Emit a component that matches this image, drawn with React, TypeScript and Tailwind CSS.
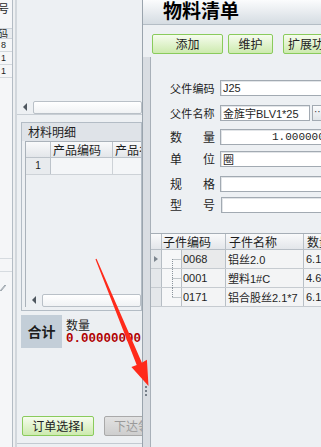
import React from "react";

function LeftArrow() {
  return (
    <div className="w-[16px] h-full flex items-center justify-center shrink-0">
      <div className="w-0 h-0 border-y-[4px] border-y-transparent border-r-[4px] border-r-[#4f575f]" />
    </div>
  );
}

function TreeCell({ kind }: { kind: "first" | "mid" | "last" }) {
  const y1 = kind === "first" ? 9 : 0;
  const y2 = kind === "last" ? 9 : 19;
  return (
    <div className="w-[19px] h-full shrink-0 bg-[#f6f7f8]">
      <svg width="19" height="19" viewBox="0 0 19 19">
        <line x1="10.5" y1={y1} x2="10.5" y2={y2} stroke="#8b949c" strokeWidth="1" strokeDasharray="1 1" />
        <line x1="10.5" y1="9.5" x2="19" y2="9.5" stroke="#8b949c" strokeWidth="1" strokeDasharray="1 1" />
      </svg>
    </div>
  );
}

function GridRow({
  kind,
  code,
  name,
  qty,
  selected,
}: {
  kind: "first" | "mid" | "last";
  code: string;
  name: React.ReactNode;
  qty: string;
  selected?: boolean;
}) {
  return (
    <div className="h-[19px] flex border-b border-[#c6cbd0] text-[11px] leading-[18px]">
      <div className="w-[11px] shrink-0 bg-[#e4e7ea] border-r border-[#b6bdc4] flex items-center justify-center">
        {selected && (
          <div className="w-0 h-0 border-y-[3px] border-y-transparent border-l-[4px] border-l-[#7d868f]" />
        )}
      </div>
      <TreeCell kind={kind} />
      <div
        className={
          selected
            ? "w-[45px] shrink-0 border-x border-[#b8bfc6] bg-[#e9eaeb] pl-[1px]"
            : "w-[45px] shrink-0 border-x border-[#b8bfc6] bg-[#f3f4f5] pl-[1px]"
        }
      >
        {code}
      </div>
      <div className="w-[78px] shrink-0 border-r border-[#b8bfc6] bg-[#f3f4f5] pl-[2px] whitespace-nowrap overflow-hidden">
        {name}
      </div>
      <div className="flex-1 bg-[#f3f4f5] pl-[2px]">{qty}</div>
    </div>
  );
}

function FormRow({
  label,
  children,
  className,
}: {
  label: React.ReactNode;
  children: React.ReactNode;
  className: string;
}) {
  return (
    <div className={"flex items-center h-[16px] " + className}>
      <div className="ml-[19px] w-[45px] mr-[5px] shrink-0 flex justify-between whitespace-nowrap text-[12px] leading-[16px] font-['Noto_Sans_CJK_SC',sans-serif]">
        {label}
      </div>
      {children}
    </div>
  );
}

function Input({ children, className }: { children?: React.ReactNode; className: string }) {
  return (
    <div
      className={
        "h-[16px] shrink-0 border border-[#a2aab2] bg-white shadow-[inset_1px_1px_0_#e2e5e8] text-[11px] leading-[14px] whitespace-nowrap overflow-hidden " +
        className
      }
    >
      {children}
    </div>
  );
}

export default function App() {
  return (
    <div className="relative flex w-[321px] h-[447px] overflow-hidden bg-[#edf0f3] text-[12px] text-[#1e1e1e] font-['Liberation_Sans','Noto_Sans_CJK_SC',sans-serif]">
      {/* far-left cut-off table */}
      <div className="w-[13px] shrink-0 flex flex-col bg-[#f5f6f8] border-r border-[#b4bcc4] overflow-hidden">
        <div className="h-[29px] shrink-0 border-b border-[#cdd3d9] flex justify-end pr-[3px] pt-[3px] text-[11px] leading-[11px] font-['Noto_Sans_CJK_SC',sans-serif]">
          号
        </div>
        <div className="h-[10px] shrink-0 border-b border-[#cdd3d9] bg-[#e9ecef] flex justify-end pr-[4px] text-[10px] leading-[9px] overflow-hidden font-['Noto_Sans_CJK_SC',sans-serif]">
          码
        </div>
        <div className="h-[13px] shrink-0 border-b border-[#d3d8dd] text-[9px] leading-[12px] pl-[1px]">8</div>
        <div className="h-[13px] shrink-0 border-b border-[#d3d8dd] text-[9px] leading-[12px] pl-[1px]">1</div>
        <div className="h-[13px] shrink-0 border-b border-[#d3d8dd] text-[9px] leading-[12px] pl-[1px]">1</div>
        <div className="h-[181px] shrink-0 border-b border-[#d6dbe0]" />
        <div className="h-[13px] shrink-0 border-b border-[#d6dbe0]" />
        <div className="h-[30px] shrink-0 flex items-center">
          <svg width="6" height="10" viewBox="0 0 6 10">
            <path d="M0 9 L5 3 M1 9 L6 3" stroke="#9aa3ab" strokeWidth="1" />
          </svg>
        </div>
        <div className="flex-1" />
      </div>
      <div className="w-[4px] shrink-0 bg-[#eef0f2] border-r-2 border-[#d2d7dc]" />

      {/* left panel */}
      <div className="w-[125px] shrink-0 flex flex-col overflow-hidden">
        <div className="h-[100px] shrink-0" />
        <div className="h-[14px] shrink-0 flex items-center">
          <LeftArrow />
          <div className="flex-1 h-[13px] border border-[#b9c0c7] rounded-[2px] bg-gradient-to-b from-white to-[#f0f2f4]" />
        </div>
        <div className="h-[1px] shrink-0 bg-[#c8ced4]" />
        <div className="h-[7px] shrink-0" />
        {/* group box */}
        <div className="ml-[4px] w-[121px] h-[189px] shrink-0 border border-[#b3bcc5] flex flex-col">
          <div className="h-[18px] shrink-0 bg-[#dfe3e8] pl-[6px] text-[12px] leading-[18px] font-['Noto_Sans_CJK_SC',sans-serif]">
            材料明细
          </div>
          <div className="ml-[3px] flex-1 flex flex-col border-l border-t border-[#aab2ba] overflow-hidden">
            <div className="h-[16px] shrink-0 flex bg-gradient-to-b from-[#f9fafb] to-[#e3e6ea] border-b border-[#bcc3ca] text-[12px] leading-[15px] font-['Noto_Sans_CJK_SC',sans-serif]">
              <div className="w-[25px] shrink-0 border-r border-[#bcc3ca]" />
              <div className="w-[62px] shrink-0 border-r border-[#bcc3ca] pl-[2px]">产品编码</div>
              <div className="w-[60px] shrink-0 pl-[2px] whitespace-nowrap">产品名称</div>
            </div>
            <div className="h-[17px] shrink-0 flex border-b border-[#cdd2d7] text-[10px] leading-[16px]">
              <div className="w-[25px] shrink-0 border-r border-[#bcc3ca] bg-[#e8ebee] text-center">1</div>
              <div className="w-[62px] shrink-0 border-r border-[#cdd2d7] bg-[#f4f6f8]" />
              <div className="flex-1 bg-[#f4f6f8]" />
            </div>
            <div className="flex-1" />
            <div className="h-[14px] shrink-0 flex items-center">
              <LeftArrow />
              <div className="flex-1 h-[13px] border border-[#b9c0c7] rounded-[2px] bg-gradient-to-b from-white to-[#f0f2f4]" />
            </div>
          </div>
          <div className="h-[3px] shrink-0" />
        </div>
        {/* 合计 */}
        <div className="mt-[4px] ml-[4px] w-[121px] h-[33px] shrink-0 flex overflow-hidden">
          <div className="w-[41px] shrink-0 bg-[#c3ced8] flex items-center justify-center text-[14px] font-bold font-['Noto_Sans_CJK_SC',sans-serif]">
            合计
          </div>
          <div className="flex-1 bg-[#eceff2] pl-[4px] flex flex-col overflow-hidden">
            <div className="pt-[2px] text-[12px] leading-[15px] font-['Noto_Sans_CJK_SC',sans-serif]">数量</div>
            <div className="mt-[1px] font-['Liberation_Mono',monospace] font-bold text-[12.5px] leading-[13px] text-[#b00000] whitespace-nowrap">
              0.00000000
            </div>
          </div>
        </div>
        {/* buttons */}
        <div className="mt-[68px] ml-[5px] h-[20px] shrink-0 flex gap-[10px]">
          <div className="w-[72px] shrink-0 h-[20px] border border-[#8acb5c] rounded-[2px] bg-gradient-to-b from-[#f6fcee] to-[#cdeaae] flex items-center justify-center text-[12px] leading-none text-[#222] font-['Noto_Sans_CJK_SC',sans-serif]">
            订单选择I
          </div>
          <div className="w-[60px] shrink-0 h-[20px] border border-[#a9a9a9] rounded-[2px] bg-gradient-to-b from-[#e2e2e2] to-[#cecece] flex items-center pl-[9px] text-[12px] leading-none text-[#9a9a9a] whitespace-nowrap font-['Noto_Sans_CJK_SC',sans-serif]">
            下达领料
          </div>
        </div>
        <div className="mt-[7px] h-[1px] shrink-0 bg-[#c3cad1]" />
        <div className="flex-1" />
      </div>

      {/* right window */}
      <div className="w-[330px] shrink-0 flex flex-col border-l border-[#9aa4ad]">
        <div className="h-[25px] shrink-0 bg-gradient-to-b from-[#fbfcfd] to-[#d5dce2] border-b border-[#b4bdc5] pl-[20px] text-[19px] leading-[19px] font-bold text-black font-['Noto_Sans_CJK_SC',sans-serif]">
          物料清单
        </div>
        <div className="h-[32px] shrink-0 flex items-start pt-[9px] pl-[9px] font-['Noto_Sans_CJK_SC',sans-serif]">
          <div className="w-[71px] shrink-0 h-[20px] border border-[#8acb5c] rounded-[2px] bg-gradient-to-b from-[#f6fcee] to-[#cdeaae] flex items-center justify-center text-[12px] leading-none text-[#222]">
            添加
          </div>
          <div className="ml-[5px] w-[45px] shrink-0 h-[20px] border border-[#8acb5c] rounded-[2px] bg-gradient-to-b from-[#f6fcee] to-[#cdeaae] flex items-center justify-center text-[12px] leading-none text-[#222]">
            维护
          </div>
          <div className="ml-[10px] w-[70px] shrink-0 h-[20px] border border-[#8acb5c] rounded-[2px] bg-gradient-to-b from-[#f6fcee] to-[#cdeaae] flex items-center pl-[4px] text-[12px] leading-none text-[#222] whitespace-nowrap">
            扩展功能
          </div>
        </div>
        <div className="flex-1 flex min-h-0">
          {/* splitter strip */}
          <div className="w-[7px] shrink-0 bg-[#d9dde2] flex flex-col">
            <div className="h-[329px] shrink-0" />
            <div className="flex flex-col gap-[2px] ml-[2px]">
              <div className="w-[2px] h-[2px] bg-[#77808a]" />
              <div className="w-[2px] h-[2px] bg-[#77808a]" />
              <div className="w-[2px] h-[2px] bg-[#77808a]" />
            </div>
          </div>
          {/* content */}
          <div className="flex-1 flex flex-col border-l border-[#a8b0b8]">
            <div className="h-[23px] shrink-0" />
            <FormRow label={<span className="text-[11px] tracking-[0.2px]">父件编码</span>} className="">
              <Input className="w-[110px] pl-[2px]">J25</Input>
            </FormRow>
            <FormRow label={<span className="text-[11px] tracking-[0.2px]">父件名称</span>} className="mt-[9px]">
              <Input className="w-[90px] pl-[2px]">
                <span className="font-['Noto_Sans_CJK_SC',sans-serif] text-[11px]">金旌宇</span>
                <span>BLV1*25</span>
              </Input>
              <div className="ml-[2px] w-[14px] h-[16px] shrink-0 border border-[#a2aab2] bg-gradient-to-b from-[#fafbfc] to-[#e1e5e9] text-[10px] leading-[12px] pl-[1px] text-[#333]">
                ··
              </div>
            </FormRow>
            <FormRow
              label={
                <>
                  <span>数</span>
                  <span>量</span>
                </>
              }
              className="mt-[8px]"
            >
              <Input className="w-[110px] pl-[51px] font-['Liberation_Mono',monospace] text-[10px]">1.00000000</Input>
            </FormRow>
            <FormRow
              label={
                <>
                  <span>单</span>
                  <span>位</span>
                </>
              }
              className="mt-[6px]"
            >
              <Input className="w-[110px] pl-[2px] font-['Noto_Sans_CJK_SC',sans-serif]">圈</Input>
            </FormRow>
            <FormRow
              label={
                <>
                  <span>规</span>
                  <span>格</span>
                </>
              }
              className="mt-[9px]"
            >
              <Input className="w-[110px]" />
            </FormRow>
            <FormRow
              label={
                <>
                  <span>型</span>
                  <span>号</span>
                </>
              }
              className="mt-[5px]"
            >
              <Input className="w-[110px] ml-[1px]" />
            </FormRow>
            {/* grid */}
            <div className="mt-[20px] flex-1 flex flex-col border-t border-[#a6aeb6]">
              <div className="h-[16px] shrink-0 flex bg-gradient-to-b from-[#f9fafb] to-[#e3e6ea] border-b border-[#b8bfc6] text-[12px] leading-[15px] font-['Noto_Sans_CJK_SC',sans-serif]">
                <div className="w-[11px] shrink-0 border-r border-[#b8bfc6]" />
                <div className="w-[64px] shrink-0 border-r border-[#b8bfc6] pl-[1px]">子件编码</div>
                <div className="w-[78px] shrink-0 border-r border-[#b8bfc6] pl-[3px]">子件名称</div>
                <div className="flex-1 pl-[3px]">数量</div>
              </div>
              <GridRow
                kind="first"
                selected
                code="0068"
                name={
                  <>
                    <span className="font-['Noto_Sans_CJK_SC',sans-serif]">铝丝</span>2.0
                  </>
                }
                qty="6.1"
              />
              <GridRow
                kind="mid"
                code="0001"
                name={
                  <>
                    <span className="font-['Noto_Sans_CJK_SC',sans-serif]">塑料</span>1#C
                  </>
                }
                qty="4.6"
              />
              <GridRow
                kind="last"
                code="0171"
                name={
                  <>
                    <span className="font-['Noto_Sans_CJK_SC',sans-serif]">铝合股丝</span>2.1*7
                  </>
                }
                qty="6.1"
              />
              <div className="flex-1" />
            </div>
          </div>
        </div>
      </div>

      {/* red annotation arrow */}
      <svg
        className="absolute left-0 top-0 pointer-events-none"
        width="321"
        height="447"
        viewBox="0 0 321 447"
      >
        <polygon
          points="96.55,258.77 141.9,362.7 146.9,359.7 148.5,386 131.4,367.1 136.7,364.9 95.45,259.23"
          fill="#ff2a1a"
        />
      </svg>
    </div>
  );
}
